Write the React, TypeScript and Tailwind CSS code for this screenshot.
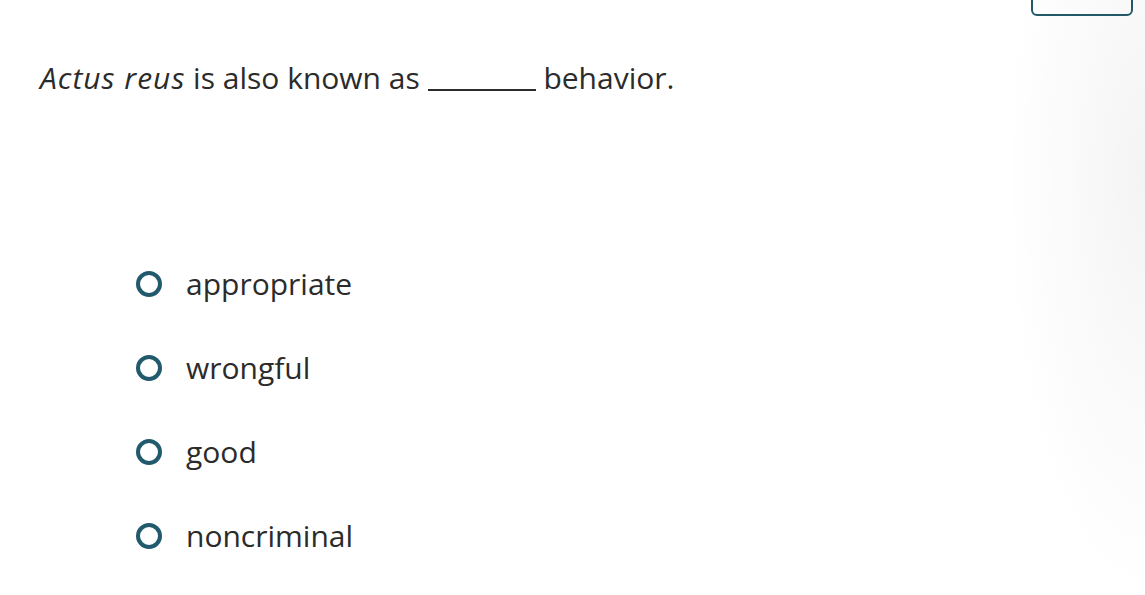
import React from "react";

const options = ["appropriate", "wrongful", "good", "noncriminal"];

export default function App() {
  return (
    <div
      className="relative w-[1145px] h-[595px] overflow-hidden bg-white text-[#2b2b2b]"
      style={{ fontFamily: "'Open Sans', sans-serif" }}
    >
      <div className="pointer-events-none absolute inset-0 bg-[radial-gradient(ellipse_140px_420px_at_100%_30%,rgba(0,0,0,0.045),rgba(0,0,0,0))]" />
      <div className="absolute right-[12px] top-[-10px] w-[102px] h-[26px] rounded-[6px] border-2 border-[#245768]" />
      <div className="relative pl-[40px] pt-[60px]">
        <p className="text-[30px] leading-[36px]">
          <em className="italic tracking-[1px]">Actus reus</em> is also known as{" "}
          <span className="inline-block w-[108px] border-b-2 border-[#2b2b2b] align-baseline translate-y-[2px]" />{" "}
          behavior.
        </p>
        <div className="mt-[170px] ml-[96px] flex flex-col gap-[48px]">
          {options.map((o) => (
            <label key={o} className="flex items-center h-[36px]">
              <span className="w-[26px] h-[26px] rounded-full border-[4px] border-[#215a6c] shrink-0" />
              <span className="ml-[24px] text-[30px] leading-[36px]">{o}</span>
            </label>
          ))}
        </div>
      </div>
    </div>
  );
}
